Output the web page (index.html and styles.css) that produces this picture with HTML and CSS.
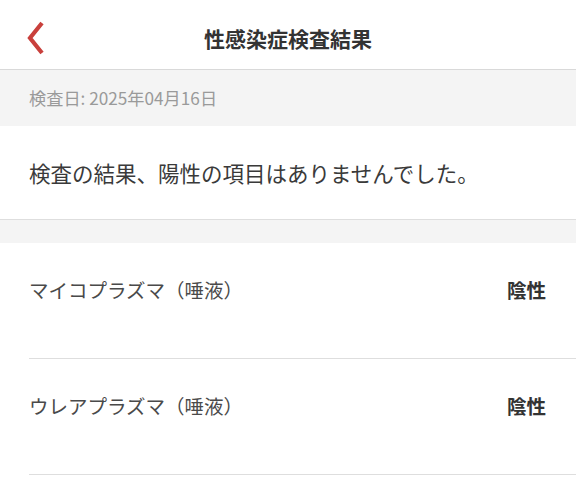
FILE: index.html
```html
<!DOCTYPE html>
<html lang="ja">
<head>
    <meta charset="UTF-8">
    <meta name="viewport" content="width=device-width, initial-scale=1.0">
    <title>性感染症検査結果</title>
    <link rel="stylesheet" href="styles.css">
</head>
<body>
    <div class="header">
        <a class="back" href="#">
            <svg width="20" height="34" viewBox="0 0 20 34">
                <polyline points="16,2 4,17 16,32" fill="none" stroke="#c9403c" stroke-width="4.2" stroke-linejoin="miter"/>
            </svg>
        </a>
        <h1>性感染症検査結果</h1>
    </div>

    <div class="date">検査日: 2025年04月16日</div>

    <div class="message">検査の結果、陽性の項目はありませんでした。</div>

    <div class="spacer"></div>

    <!-- 検査項目 -->
    <ul class="items">
        <li class="item">
            <span class="name">マイコプラズマ（唾液）</span>
            <span class="status">陰性</span>
        </li>
        <li class="item">
            <span class="name">ウレアプラズマ（唾液）</span>
            <span class="status">陰性</span>
        </li>
    </ul>
</body>
</html>
```

FILE: styles.css
```css
body {
    font-family: "Noto Sans CJK JP", "Noto Sans", sans-serif;
    background-color: #fff;
    color: #333;
    margin: 0;
    padding: 0;
}
.header {
    position: relative;
    height: 70px;
    padding-top: 7px;
    box-sizing: border-box;
    display: flex;
    align-items: center;
    justify-content: center;
    border-bottom: 1px solid #d9d9d9;
}
.back {
    position: absolute;
    left: 26px;
    top: 21px;
    display: block;
    width: 20px;
    height: 34px;
}
.header h1 {
    margin: 0;
    font-size: 21px;
    font-weight: bold;
    color: #333;
}
.date {
    background: #f4f4f4;
    height: 56px;
    line-height: 56px;
    padding: 0 29px;
    font-size: 17.2px;
    color: #9a9a9a;
}
.message {
    padding: 32px 29px;
    line-height: 29px;
    font-size: 21.5px;
    color: #3a3a3a;
    border-bottom: 1px solid #dedede;
}
.spacer {
    height: 23px;
    background: #f4f4f4;
}
.items {
    list-style: none;
    margin: 0;
    padding: 0;
}
.item {
    display: flex;
    justify-content: space-between;
    margin-left: 29px;
    padding: 33px 30px 54px 0;
    line-height: 28px;
    border-bottom: 1px solid #dedede;
}
.name {
    font-size: 19.5px;
    color: #4a4a4a;
}
.status {
    font-size: 19.5px;
    font-weight: bold;
    color: #333;
}
```
